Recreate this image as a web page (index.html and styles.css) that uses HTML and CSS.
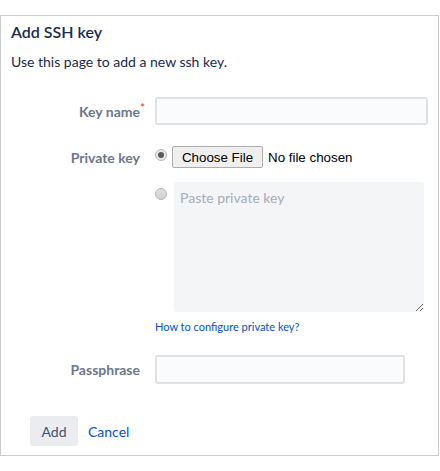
FILE: index.html
```html
<!DOCTYPE html>
<html>
<head>
<meta charset="utf-8">
<link rel="stylesheet" href="styles.css">
</head>
<body>
<div class="panel">
  <h1 class="title">Add SSH key</h1>
  <p class="desc">Use this page to add a new ssh key.</p>
  <form class="form">
    <div class="row row-name">
      <label class="label">Key name<span class="req">*</span></label>
      <input class="text-input name-input" type="text">
    </div>
    <div class="row row-file">
      <span class="label">Private key</span>
      <span class="radio checked"></span>
      <span class="file-btn">Choose File</span>
      <span class="file-text">No file chosen</span>
    </div>
    <div class="row row-paste">
      <span class="radio"></span>
      <textarea class="paste" placeholder="Paste private key"></textarea>
    </div>
    <div class="row row-link">
      <a class="help" href="#">How to configure private key?</a>
    </div>
    <div class="row row-pass">
      <label class="label">Passphrase</label>
      <input class="text-input pass-input" type="password">
    </div>
    <div class="actions">
      <span class="btn">Add</span>
      <a class="cancel" href="#">Cancel</a>
    </div>
  </form>
</div>
</body>
</html>
```
FILE: styles.css
```css
html, body {
  margin: 0;
  padding: 0;
  background: #fff;
}
body {
  font-family: Lato, "Noto Sans", sans-serif;
  font-size: 14px;
  color: #172b4d;
}
.panel {
  margin-top: 15px;
  width: 439px;
  box-sizing: border-box;
  border: 1px solid #cccccc;
  padding: 6px 10px 9px 10px;
}
.title {
  margin: 0;
  font-size: 16px;
  line-height: 20px;
  font-weight: 600;
  color: #172b4d;
}
.desc {
  margin: 10px 0 0 0;
  line-height: 20px;
}
.form {
  margin-top: 25px;
  margin-left: -11px;
}
.row {
  display: flex;
  align-items: center;
}
.label {
  width: 140px;
  flex: none;
  text-align: right;
  font-weight: 700;
  color: #6b778c;
  position: relative;
  margin-right: 15px;
}
.req {
  position: absolute;
  right: -5px;
  top: -3px;
  color: #de350b;
  font-weight: 400;
  font-size: 12px;
}
.text-input {
  box-sizing: border-box;
  border: 2px solid #dfe1e6;
  background: #fafbfc;
  border-radius: 3px;
  height: 28px;
  padding: 0 6px;
  margin: 0;
  font: inherit;
}
.name-input { width: 275px; }
.pass-input { width: 250px; height: 29px; }
.row-file {
  margin-top: 21px;
  height: 22px;
}
.radio {
  flex: none;
  box-sizing: border-box;
  width: 12px;
  height: 12px;
  border-radius: 50%;
  border: 1px solid #b9b9b9;
  background: linear-gradient(#dedede, #d2d2d2);
  position: relative;
}
.radio.checked {
  background: #e6e6e6;
}
.radio.checked::after {
  content: "";
  position: absolute;
  left: 2px;
  top: 2px;
  width: 6px;
  height: 6px;
  border-radius: 50%;
  background: #5a5a5a;
}
.row-file .radio { margin-top: -4px; }
.file-btn {
  margin-left: 5px;
  box-sizing: border-box;
  height: 22px;
  width: 91px;
  border: 1px solid #adadad;
  border-radius: 2px;
  background: #efefef;
  font-family: "Liberation Sans", Arial, sans-serif;
  font-size: 13.33px;
  color: #000;
  display: flex;
  align-items: center;
  justify-content: center;
}
.file-text {
  margin-left: 5px;
  font-family: "Liberation Sans", Arial, sans-serif;
  font-size: 13.33px;
  color: #000;
}
.row-paste {
  margin-top: 14px;
  margin-left: 155px;
  align-items: flex-start;
}
.row-paste .radio {
  margin-top: 6px;
}
.paste {
  margin: 0 0 0 7px;
  width: 250px;
  height: 130px;
  box-sizing: border-box;
  border: 0;
  border-radius: 3px;
  background: #f4f5f7;
  padding: 6px 6px;
  font: inherit;
  line-height: 20px;
  color: #172b4d;
  resize: both;
  outline: none;
}
.paste::placeholder {
  color: #a5adba;
}
.row-link {
  margin-top: 8px;
  margin-left: 155px;
  line-height: 14px;
}
.help {
  font-size: 11px;
  color: #0052cc;
  text-decoration: none;
}
.row-pass {
  margin-top: 21px;
}
.actions {
  margin-top: 32px;
  margin-left: 30px;
  display: flex;
  align-items: center;
}
.btn {
  box-sizing: border-box;
  width: 48px;
  height: 30px;
  border-radius: 3px;
  background: #ebecf0;
  color: #42526e;
  display: flex;
  align-items: center;
  justify-content: center;
}
.cancel {
  margin-left: 10px;
  color: #0052cc;
  text-decoration: none;
}
```
